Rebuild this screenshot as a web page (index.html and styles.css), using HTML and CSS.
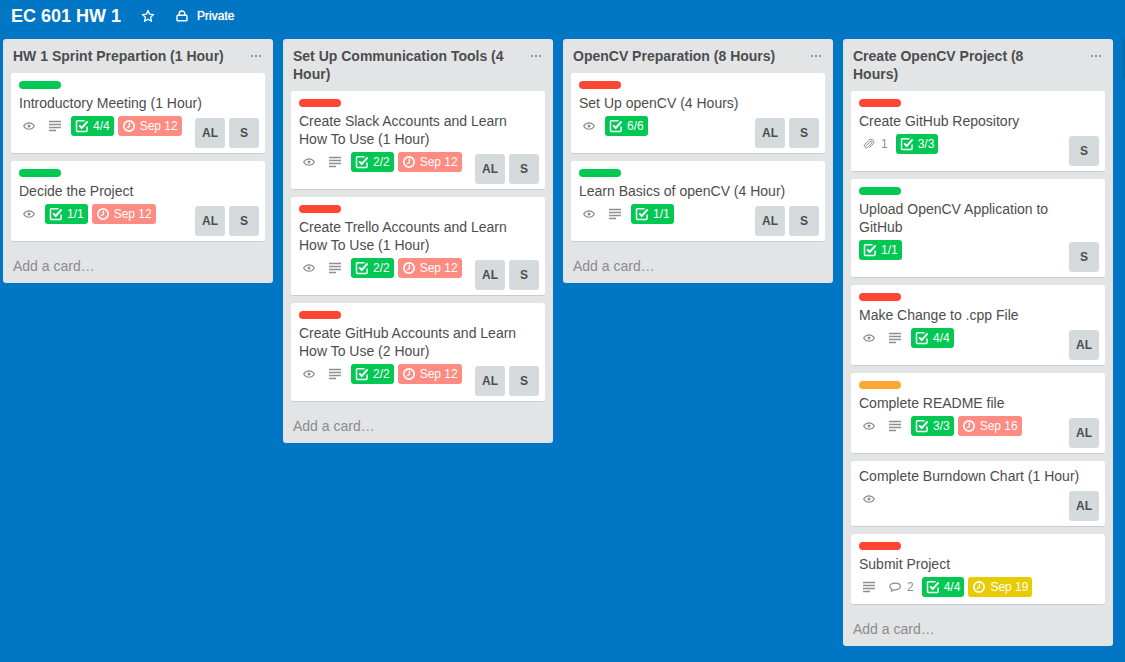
FILE: index.html
```html
<!DOCTYPE html>
<html lang="en">
<head>
<meta charset="utf-8">
<meta name="viewport" content="width=device-width, initial-scale=1">
<title>EC 601 HW 1</title>
<link rel="stylesheet" href="styles.css">
</head>
<body>
<svg class="sprite" aria-hidden="true">
  <symbol id="eye" viewBox="0 0 12 12"><path d="M.6 6C3.2 1.7 8.800 1.700 11.400 6 8.800 10.300 3.200 10.300.6 6Z" fill="none" stroke="currentColor" stroke-width="1.200"/><circle cx="6" cy="6" r="1.500" fill="currentColor"/></symbol>
  <symbol id="desc" viewBox="0 0 12 12"><path d="M0 1.500h12M0 4.500h12M0 7.500h12M0 10.500h7" stroke="currentColor" stroke-width="1.300"/></symbol>
  <symbol id="check" viewBox="0 0 14 14"><path d="M9.500 1.800H2.300a.8.8 0 0 0-.8.8v9a.8.8 0 0 0 .8.8h9a.8.8 0 0 0 .8-.8V7.500" fill="none" stroke="currentColor" stroke-width="1.500"/><path d="M4.200 6.300 6.700 9 12.600 2.500" fill="none" stroke="currentColor" stroke-width="1.900"/></symbol>
  <symbol id="clock" viewBox="0 0 14 14"><circle cx="7" cy="7" r="5.200" fill="none" stroke="currentColor" stroke-width="1.700"/><path d="M7.400 3.800v3.600L5 9" fill="none" stroke="currentColor" stroke-width="1.400"/></symbol>
  <symbol id="comment" viewBox="0 0 12 12"><path d="M6.200 2.200C3 2.200.8 3.500.8 5.500c0 1.200.8 2 2 2.600L2.300 10.300 5 8.800c3.800.2 6.400-1.200 6.400-3.300 0-2-2.200-3.300-5.200-3.300Z" fill="none" stroke="currentColor" stroke-width="1.200" stroke-linejoin="round"/></symbol>
  <symbol id="clip" viewBox="0 0 12 12"><path d="M2.700 8.300 7.200 3.600c1.300-1.300 2.800.2 1.600 1.500L4.900 9.200C3 11.200-.2 8.600 1.900 6.300L6 2.200c2.600-2.500 6.600.7 4.200 3.600L6.500 9.900" fill="none" stroke="currentColor" stroke-width="1"/></symbol>
  <symbol id="star" viewBox="0 0 14 14"><path d="m7 1.500 1.600 3.700 4 .4-3 2.700.9 4L7 10.200l-3.500 2.100.9-4-3-2.700 4-.4Z" fill="none" stroke="currentColor" stroke-width="1.300" stroke-linejoin="round"/></symbol>
  <symbol id="lock" viewBox="0 0 14 14"><rect x="2" y="6.300" width="10" height="5.500" rx=".8" fill="none" stroke="currentColor" stroke-width="1.400"/><path d="M4.200 6V4.600c0-3.400 5.600-3.400 5.600 0V6" fill="none" stroke="currentColor" stroke-width="1.400"/></symbol>
  <symbol id="dots" viewBox="0 0 12 12"><path d="M1 5h2v2H1zM5 5h2v2H5zM9 5h2v2H9z" fill="currentColor"/></symbol>
</svg>

<header class="board-header">
  <h1 class="board-name">EC 601 HW 1</h1>
  <button class="header-button" type="button" aria-label="Star board"><svg class="icon-large"><use href="#star"/></svg></button>
  <button class="header-button" type="button"><svg class="icon-large"><use href="#lock"/></svg>Private</button>
</header>

<main class="board">
  <section class="list">
    <header class="list-header"><h2 class="list-name">HW 1 Sprint Prepartion (1 Hour)</h2><button class="list-menu" type="button" aria-label="List actions"><svg class="icon"><use href="#dots"/></svg></button></header>
    <div class="cards">
      <article class="card">
        <span class="label green"></span>
        <a class="card-title" href="#">Introductory Meeting (1 Hour)</a>
        <div class="card-foot">
          <div class="badges">
            <span class="badge"><svg class="icon"><use href="#eye"/></svg></span>
            <span class="badge"><svg class="icon"><use href="#desc"/></svg></span>
            <span class="badge complete"><svg class="icon-large"><use href="#check"/></svg>4/4</span>
            <span class="badge overdue"><svg class="icon-large"><use href="#clock"/></svg>Sep 12</span>
          </div>
          <div class="members"><span class="member">AL</span><span class="member">S</span></div>
        </div>
      </article>
      <article class="card">
        <span class="label green"></span>
        <a class="card-title" href="#">Decide the Project</a>
        <div class="card-foot">
          <div class="badges">
            <span class="badge"><svg class="icon"><use href="#eye"/></svg></span>
            <span class="badge complete"><svg class="icon-large"><use href="#check"/></svg>1/1</span>
            <span class="badge overdue"><svg class="icon-large"><use href="#clock"/></svg>Sep 12</span>
          </div>
          <div class="members"><span class="member">AL</span><span class="member">S</span></div>
        </div>
      </article>
    </div>
    <button class="add-card" type="button">Add a card…</button>
  </section>

  <section class="list">
    <header class="list-header"><h2 class="list-name">Set Up Communication Tools (4 Hour)</h2><button class="list-menu" type="button" aria-label="List actions"><svg class="icon"><use href="#dots"/></svg></button></header>
    <div class="cards">
      <article class="card">
        <span class="label red"></span>
        <a class="card-title" href="#">Create Slack Accounts and Learn How To Use (1 Hour)</a>
        <div class="card-foot">
          <div class="badges">
            <span class="badge"><svg class="icon"><use href="#eye"/></svg></span>
            <span class="badge"><svg class="icon"><use href="#desc"/></svg></span>
            <span class="badge complete"><svg class="icon-large"><use href="#check"/></svg>2/2</span>
            <span class="badge overdue"><svg class="icon-large"><use href="#clock"/></svg>Sep 12</span>
          </div>
          <div class="members"><span class="member">AL</span><span class="member">S</span></div>
        </div>
      </article>
      <article class="card">
        <span class="label red"></span>
        <a class="card-title" href="#">Create Trello Accounts and Learn How To Use (1 Hour)</a>
        <div class="card-foot">
          <div class="badges">
            <span class="badge"><svg class="icon"><use href="#eye"/></svg></span>
            <span class="badge"><svg class="icon"><use href="#desc"/></svg></span>
            <span class="badge complete"><svg class="icon-large"><use href="#check"/></svg>2/2</span>
            <span class="badge overdue"><svg class="icon-large"><use href="#clock"/></svg>Sep 12</span>
          </div>
          <div class="members"><span class="member">AL</span><span class="member">S</span></div>
        </div>
      </article>
      <article class="card">
        <span class="label red"></span>
        <a class="card-title" href="#">Create GitHub Accounts and Learn How To Use (2 Hour)</a>
        <div class="card-foot">
          <div class="badges">
            <span class="badge"><svg class="icon"><use href="#eye"/></svg></span>
            <span class="badge"><svg class="icon"><use href="#desc"/></svg></span>
            <span class="badge complete"><svg class="icon-large"><use href="#check"/></svg>2/2</span>
            <span class="badge overdue"><svg class="icon-large"><use href="#clock"/></svg>Sep 12</span>
          </div>
          <div class="members"><span class="member">AL</span><span class="member">S</span></div>
        </div>
      </article>
    </div>
    <button class="add-card" type="button">Add a card…</button>
  </section>

  <section class="list">
    <header class="list-header"><h2 class="list-name">OpenCV Preparation (8 Hours)</h2><button class="list-menu" type="button" aria-label="List actions"><svg class="icon"><use href="#dots"/></svg></button></header>
    <div class="cards">
      <article class="card">
        <span class="label red"></span>
        <a class="card-title" href="#">Set Up openCV (4 Hours)</a>
        <div class="card-foot">
          <div class="badges">
            <span class="badge"><svg class="icon"><use href="#eye"/></svg></span>
            <span class="badge complete"><svg class="icon-large"><use href="#check"/></svg>6/6</span>
          </div>
          <div class="members"><span class="member">AL</span><span class="member">S</span></div>
        </div>
      </article>
      <article class="card">
        <span class="label green"></span>
        <a class="card-title" href="#">Learn Basics of openCV (4 Hour)</a>
        <div class="card-foot">
          <div class="badges">
            <span class="badge"><svg class="icon"><use href="#eye"/></svg></span>
            <span class="badge"><svg class="icon"><use href="#desc"/></svg></span>
            <span class="badge complete"><svg class="icon-large"><use href="#check"/></svg>1/1</span>
          </div>
          <div class="members"><span class="member">AL</span><span class="member">S</span></div>
        </div>
      </article>
    </div>
    <button class="add-card" type="button">Add a card…</button>
  </section>

  <section class="list">
    <header class="list-header"><h2 class="list-name">Create OpenCV Project (8 Hours)</h2><button class="list-menu" type="button" aria-label="List actions"><svg class="icon"><use href="#dots"/></svg></button></header>
    <div class="cards">
      <article class="card">
        <span class="label red"></span>
        <a class="card-title" href="#">Create GitHub Repository</a>
        <div class="card-foot">
          <div class="badges">
            <span class="badge"><svg class="icon"><use href="#clip"/></svg>1</span>
            <span class="badge complete"><svg class="icon-large"><use href="#check"/></svg>3/3</span>
          </div>
          <div class="members"><span class="member">S</span></div>
        </div>
      </article>
      <article class="card">
        <span class="label green"></span>
        <a class="card-title" href="#">Upload OpenCV Application to GitHub</a>
        <div class="card-foot">
          <div class="badges">
            <span class="badge complete"><svg class="icon-large"><use href="#check"/></svg>1/1</span>
          </div>
          <div class="members"><span class="member">S</span></div>
        </div>
      </article>
      <article class="card">
        <span class="label red"></span>
        <a class="card-title" href="#">Make Change to .cpp File</a>
        <div class="card-foot">
          <div class="badges">
            <span class="badge"><svg class="icon"><use href="#eye"/></svg></span>
            <span class="badge"><svg class="icon"><use href="#desc"/></svg></span>
            <span class="badge complete"><svg class="icon-large"><use href="#check"/></svg>4/4</span>
          </div>
          <div class="members"><span class="member">AL</span></div>
        </div>
      </article>
      <article class="card">
        <span class="label orange"></span>
        <a class="card-title" href="#">Complete README file</a>
        <div class="card-foot">
          <div class="badges">
            <span class="badge"><svg class="icon"><use href="#eye"/></svg></span>
            <span class="badge"><svg class="icon"><use href="#desc"/></svg></span>
            <span class="badge complete"><svg class="icon-large"><use href="#check"/></svg>3/3</span>
            <span class="badge overdue"><svg class="icon-large"><use href="#clock"/></svg>Sep 16</span>
          </div>
          <div class="members"><span class="member">AL</span></div>
        </div>
      </article>
      <article class="card">
        <a class="card-title" href="#">Complete Burndown Chart (1 Hour)</a>
        <div class="card-foot">
          <div class="badges">
            <span class="badge"><svg class="icon"><use href="#eye"/></svg></span>
          </div>
          <div class="members"><span class="member">AL</span></div>
        </div>
      </article>
      <article class="card">
        <span class="label red"></span>
        <a class="card-title" href="#">Submit Project</a>
        <div class="card-foot">
          <div class="badges">
            <span class="badge"><svg class="icon"><use href="#desc"/></svg></span>
            <span class="badge"><svg class="icon"><use href="#comment"/></svg>2</span>
            <span class="badge complete"><svg class="icon-large"><use href="#check"/></svg>4/4</span>
            <span class="badge due-soon"><svg class="icon-large"><use href="#clock"/></svg>Sep 19</span>
          </div>
        </div>
      </article>
    </div>
    <button class="add-card" type="button">Add a card…</button>
  </section>

  <button class="add-list" type="button" aria-label="Add a list"></button>
</main>
</body>
</html>
```

FILE: styles.css
```css
* { box-sizing: border-box; }

body {
  margin: 0;
  min-height: 100vh;
  background: #0076c4;
  color: #4d4d4d;
  font: 14px/18px "Liberation Sans", Arial, sans-serif;
}

button {
  border: 0;
  padding: 0;
  background: none;
  color: inherit;
  font: inherit;
  text-align: left;
  cursor: pointer;
}

h1, h2 { margin: 0; }

.sprite { display: none; }

.icon, .icon-large { flex: none; display: block; }
.icon { width: 12px; height: 12px; }
.icon-large { width: 14px; height: 14px; }

.board-header {
  display: flex;
  align-items: center;
  gap: 20px;
  padding: 6px 11px 5px;
  color: #fff;
}

.board-name {
  font-size: 18px;
  line-height: 20px;
}

.header-button {
  display: flex;
  align-items: center;
  gap: 8px;
  font-size: 12px;
  text-shadow: 0 0 1px #fff;
}

.board {
  display: flex;
  align-items: flex-start;
  gap: 10px;
  padding: 8px 0 8px 3px;
}

.list {
  flex: none;
  width: 270px;
  border-radius: 3px;
  background: #e2e4e6;
}

.list-header {
  display: flex;
  align-items: flex-start;
  justify-content: space-between;
  gap: 20px;
  padding: 8px 11px 8px 10px;
}

.list-name {
  font-size: 14px;
  line-height: 18px;
}

.list-menu {
  padding: 3px 0;
  color: #999;
}

.cards {
  display: flex;
  flex-direction: column;
  gap: 7px;
  padding: 0 8px;
}

.card {
  padding: 6px 6px 5px 8px;
  border-bottom: 1px solid #c9cbcd;
  border-radius: 3px;
  background: #fff;
}

.label {
  display: block;
  width: 42px;
  height: 8px;
  margin: 2px 0 5px;
  border-radius: 4px;
}

.green { background: #00c853; }
.red { background: #ff4632; }
.orange { background: #ffa733; }

.card-title {
  display: block;
  padding-right: 12px;
  color: inherit;
  text-decoration: none;
}

.card-foot {
  display: flex;
  align-items: flex-start;
  justify-content: space-between;
}

.badges {
  display: flex;
  gap: 4px;
  margin: 4px 0 2px;
}

.badge {
  display: flex;
  align-items: center;
  gap: 4px;
  height: 20px;
  padding: 0 4px;
  border-radius: 3px;
  color: #8f8f8f;
  font-size: 12px;
}

.badge .icon { margin-right: 2px; }

.complete, .overdue, .due-soon { color: #fff; }
.complete { background: #00c853; }
.overdue { background: #ff8c82; }
.due-soon { background: #e8cb00; }

.members {
  display: flex;
  gap: 4px;
  margin-top: 6px;
}

.member {
  width: 30px;
  border-radius: 3px;
  background: #d5dadc;
  font-size: 12px;
  font-weight: bold;
  line-height: 30px;
  text-align: center;
}

.add-card {
  display: block;
  width: 100%;
  padding: 15px 10px 8px;
  color: #8c8c8c;
}

.add-list {
  flex: 0 1 270px;
  height: 40px;
  border-radius: 3px 0 0 3px;
  background: #0069af;
}
```
